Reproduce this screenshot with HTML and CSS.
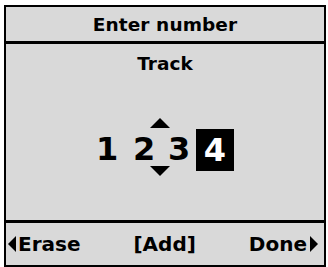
FILE: index.html
```html
<!DOCTYPE html>
<html>
<head>
<meta charset="utf-8">
<link rel="stylesheet" href="styles.css">
</head>
<body>
<div class="screen">
  <div class="header">Enter number</div>
  <div class="content">
    <div class="label">Track</div>
    <div class="digits">
      <span class="digit plain d1">1</span>
      <div class="spin">
        <svg class="arrow up" width="20" height="10" viewBox="0 0 20 10"><polygon points="10,0 20,10 0,10" fill="#000"/></svg>
        <span class="digit">2</span>
        <svg class="arrow down" width="20" height="10" viewBox="0 0 20 10"><polygon points="0,0 20,0 10,10" fill="#000"/></svg>
      </div>
      <span class="digit plain d3">3</span>
      <span class="digit sel">4</span>
    </div>
  </div>
  <div class="footer">
    <div class="soft left">
      <svg width="8" height="16" viewBox="0 0 8 16"><polygon points="8,0 8,16 0,8" fill="#000"/></svg>
      <span>Erase</span>
    </div>
    <div class="soft mid">[Add]</div>
    <div class="soft right">
      <span>Done</span>
      <svg width="8" height="16" viewBox="0 0 8 16"><polygon points="0,0 8,8 0,16" fill="#000"/></svg>
    </div>
  </div>
</div>
</body>
</html>
```

FILE: styles.css
```css
html, body {
  margin: 0;
  padding: 0;
  background: #ffffff;
}
body {
  width: 328px;
  height: 267px;
  overflow: hidden;
  font-family: "DejaVu Sans", Verdana, sans-serif;
  font-weight: bold;
  color: #000;
}
.screen {
  box-sizing: border-box;
  margin: 5px 0 0 4px;
  width: 322px;
  height: 262px;
  border: 2px solid #000;
  background: #d9d9d9;
  display: flex;
  flex-direction: column;
}
.header {
  height: 34px;
  border-bottom: 3px solid #000;
  display: flex;
  align-items: center;
  justify-content: center;
  font-size: 18.5px;
  letter-spacing: 0.1px;
}
.content {
  height: 176px;
  border-bottom: 3px solid #000;
  display: flex;
  flex-direction: column;
  align-items: center;
}
.label {
  margin-top: 9px;
  font-size: 18.5px;
  line-height: 22px;
}
.digits {
  margin-top: 43px;
  display: flex;
  align-items: flex-start;
  justify-content: center;
  font-size: 32px;
  line-height: 32px;
}
.digit {
  display: block;
  width: 22px;
  text-align: center;
}
.plain { margin-top: 15px; }
.spin {
  display: flex;
  flex-direction: column;
  align-items: center;
  margin-left: 15px;
}
.arrow {
  display: block;
  transform: translateX(16px);
}
.arrow.up { margin-bottom: 5px; }
.arrow.down { margin-top: 1px; }
.d3 { margin-left: 13px; }
.sel {
  margin-top: 11px;
  margin-left: 6px;
  width: 38px;
  height: 42px;
  line-height: 42px;
  background: #000;
  color: #fff;
}
.footer {
  flex: 1;
  display: flex;
  align-items: center;
  justify-content: space-between;
  padding: 0 6px 0 2px;
  font-size: 20px;
}
.soft {
  display: flex;
  align-items: center;
  gap: 2px;
}
.right { gap: 3px; }
.soft svg { display: block; }
```
